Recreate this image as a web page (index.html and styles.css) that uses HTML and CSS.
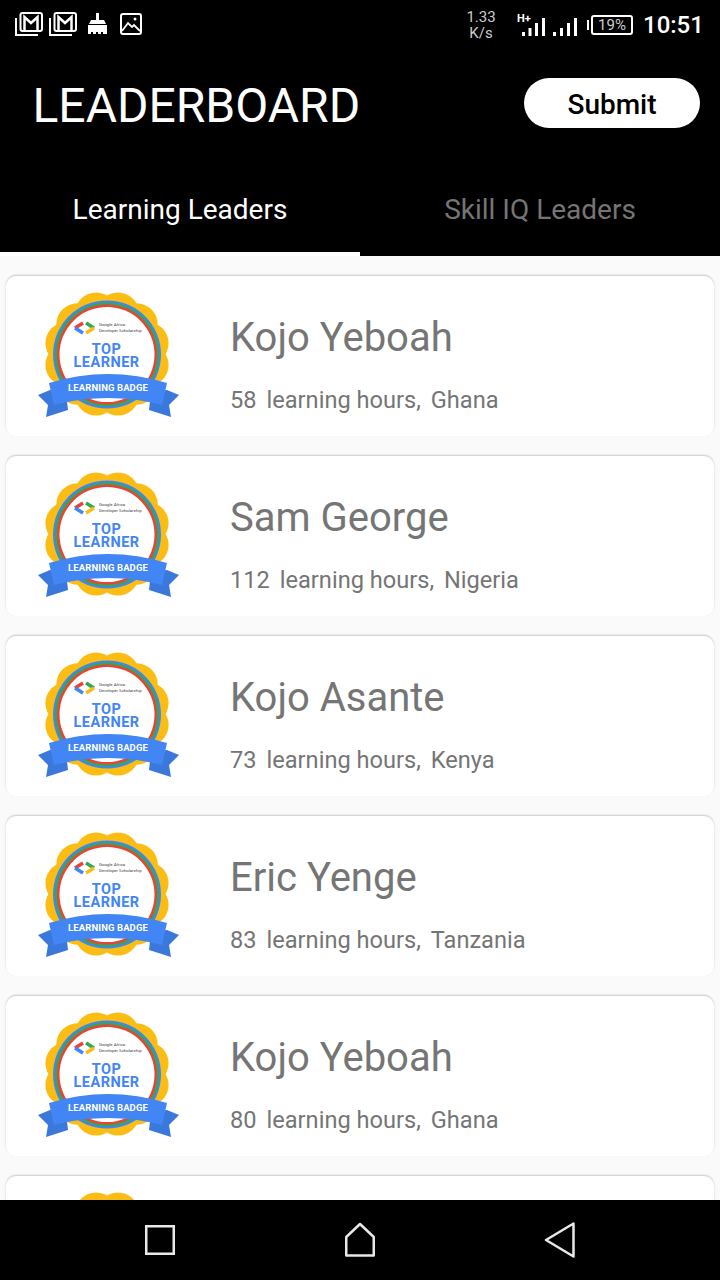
FILE: index.html
```html
<!DOCTYPE html>
<html lang="en">
<head>
  <meta charset="UTF-8">
  <title>Leaderboard</title>
  <link rel="stylesheet" href="styles.css">
</head>
<body>

  <svg class="defs" width="0" height="0">
    <symbol id="mail" viewBox="0 0 28 24">
      <path d="M1 6v17h22" fill="none" stroke="#fff" stroke-width="2"/>
      <rect x="5.500" y="1" width="21.500" height="18" rx="2" fill="none" stroke="#fff" stroke-width="2"/>
      <path d="M9.500 18V5l6.500 6 6.500-6v13" fill="none" stroke="#fff" stroke-width="2.500"/>
    </symbol>
    <symbol id="badge" viewBox="0 0 145 128">
      <g fill="#fbbc14">
        <circle cx="60.100" cy="21.400" r="21"/><circle cx="81.900" cy="21.400" r="21"/>
        <circle cx="41.300" cy="32.300" r="21"/><circle cx="100.700" cy="32.300" r="21"/>
        <circle cx="30.400" cy="51.100" r="21"/><circle cx="111.600" cy="51.100" r="21"/>
        <circle cx="30.400" cy="72.900" r="21"/><circle cx="111.600" cy="72.900" r="21"/>
        <circle cx="41.300" cy="91.700" r="21"/><circle cx="100.700" cy="91.700" r="21"/>
        <circle cx="60.100" cy="102.600" r="21"/><circle cx="81.900" cy="102.600" r="21"/>
      </g>
      <circle cx="71" cy="62.500" r="54" fill="#4285f4"/>
      <circle cx="71" cy="62.500" r="52" fill="#34a853"/>
      <circle cx="71" cy="62.500" r="50" fill="#ea4335"/>
      <circle cx="71" cy="62.500" r="47.500" fill="#fff"/>
      <path d="M47 31l-8 5" fill="none" stroke="#ea4335" stroke-width="3.500"/>
      <path d="M39 36l8 5" fill="none" stroke="#4285f4" stroke-width="3.500"/>
      <path d="M50 31l8 5" fill="none" stroke="#34a853" stroke-width="3.500"/>
      <path d="M58 36l-8 5" fill="none" stroke="#fbbc14" stroke-width="3.500"/>
      <path d="M2 103l10 10-2 12 22-7-2-18-16-2z" fill="#3b78dc"/>
      <path d="M143 103l-10 10 2 12-22-7 2-18 16-2z" fill="#3b78dc"/>
      <path d="M13 91q59-18 118 0l-5 22q-54-14-108 0z" fill="#4285f4"/>
    </symbol>
  </svg>

  <div class="phone">
    <div class="status-bar">
      <div class="status-left">
        <svg class="icon-mail"><use href="#mail"/></svg>
        <svg class="icon-mail"><use href="#mail"/></svg>
        <svg class="icon-broom" viewBox="0 0 19 22">
          <path d="M8 0h3v7h5l2 4H1l2-4h5zM0 12h19v9h-4v-2h-2v2h-3v-2H8v2H5v-2H3v2H0z" fill="#fff"/>
        </svg>
        <svg class="icon-image" viewBox="0 0 22 22">
          <rect x="1" y="1" width="20" height="20" rx="2" fill="none" stroke="#fff" stroke-width="2"/>
          <path d="M2 18l6-8 4 4 2-2 6 6" fill="none" stroke="#fff" stroke-width="1.800"/>
          <circle cx="15" cy="6" r="1.500" fill="#fff"/>
        </svg>
      </div>
      <div class="status-right">
        <div class="speed">1.33<br>K/s</div>
        <svg class="signal" viewBox="0 0 63 24">
          <text class="signal-type" x="0" y="9">H+</text>
          <path d="M5 19h3v4H5zM11.500 15h3v8h-3zM18 10h3v13h-3zM25 5h3v18h-3zM36 19h3v4h-3zM43 15h3v8h-3zM50 10h3v13h-3zM57 5h3v18h-3z" fill="#fff"/>
        </svg>
        <div class="battery-nub"></div>
        <div class="battery">19%</div>
        <div class="clock">10:51</div>
      </div>
    </div>

    <div class="top-bar">
      <h1>LEADERBOARD</h1>
      <button type="button" class="submit-btn">Submit</button>
    </div>

    <div class="tabs">
      <div class="tab active">Learning Leaders</div>
      <div class="tab">Skill IQ Leaders</div>
    </div>

    <div class="list">
      <div class="card">
        <svg class="badge" viewBox="0 0 145 128">
          <use href="#badge"/>
          <text class="badge-small" x="63" y="34">Google Africa</text>
          <text class="badge-small" x="63" y="40">Developer Scholarship</text>
          <text class="badge-top"><tspan x="70.500" y="61.500">TOP</tspan><tspan x="70.500" y="74.500">LEARNER</tspan></text>
          <text class="badge-ribbon" x="72" y="98.500">LEARNING BADGE</text>
        </svg>
        <div class="info">
          <div class="name">Kojo Yeboah</div>
          <div class="meta"><span>58</span><span>learning hours,</span><span>Ghana</span></div>
        </div>
      </div>
      <div class="card">
        <svg class="badge" viewBox="0 0 145 128">
          <use href="#badge"/>
          <text class="badge-small" x="63" y="34">Google Africa</text>
          <text class="badge-small" x="63" y="40">Developer Scholarship</text>
          <text class="badge-top"><tspan x="70.500" y="61.500">TOP</tspan><tspan x="70.500" y="74.500">LEARNER</tspan></text>
          <text class="badge-ribbon" x="72" y="98.500">LEARNING BADGE</text>
        </svg>
        <div class="info">
          <div class="name">Sam George</div>
          <div class="meta"><span>112</span><span>learning hours,</span><span>Nigeria</span></div>
        </div>
      </div>
      <div class="card">
        <svg class="badge" viewBox="0 0 145 128">
          <use href="#badge"/>
          <text class="badge-small" x="63" y="34">Google Africa</text>
          <text class="badge-small" x="63" y="40">Developer Scholarship</text>
          <text class="badge-top"><tspan x="70.500" y="61.500">TOP</tspan><tspan x="70.500" y="74.500">LEARNER</tspan></text>
          <text class="badge-ribbon" x="72" y="98.500">LEARNING BADGE</text>
        </svg>
        <div class="info">
          <div class="name">Kojo Asante</div>
          <div class="meta"><span>73</span><span>learning hours,</span><span>Kenya</span></div>
        </div>
      </div>
      <div class="card">
        <svg class="badge" viewBox="0 0 145 128">
          <use href="#badge"/>
          <text class="badge-small" x="63" y="34">Google Africa</text>
          <text class="badge-small" x="63" y="40">Developer Scholarship</text>
          <text class="badge-top"><tspan x="70.500" y="61.500">TOP</tspan><tspan x="70.500" y="74.500">LEARNER</tspan></text>
          <text class="badge-ribbon" x="72" y="98.500">LEARNING BADGE</text>
        </svg>
        <div class="info">
          <div class="name">Eric Yenge</div>
          <div class="meta"><span>83</span><span>learning hours,</span><span>Tanzania</span></div>
        </div>
      </div>
      <div class="card">
        <svg class="badge" viewBox="0 0 145 128">
          <use href="#badge"/>
          <text class="badge-small" x="63" y="34">Google Africa</text>
          <text class="badge-small" x="63" y="40">Developer Scholarship</text>
          <text class="badge-top"><tspan x="70.500" y="61.500">TOP</tspan><tspan x="70.500" y="74.500">LEARNER</tspan></text>
          <text class="badge-ribbon" x="72" y="98.500">LEARNING BADGE</text>
        </svg>
        <div class="info">
          <div class="name">Kojo Yeboah</div>
          <div class="meta"><span>80</span><span>learning hours,</span><span>Ghana</span></div>
        </div>
      </div>
      <div class="card">
        <svg class="badge" viewBox="0 0 145 128"><use href="#badge"/></svg>
      </div>
    </div>

    <div class="nav-bar">
      <svg class="nav-icon" viewBox="0 0 32 36">
        <rect x="2.250" y="4.250" width="27.500" height="27.500" fill="none" stroke="#e8e8e8" stroke-width="2.500"/>
      </svg>
      <svg class="nav-icon" viewBox="0 0 32 36">
        <path d="M2.250 33.500V15L16 2l13.750 13v18.500z" fill="none" stroke="#e8e8e8" stroke-width="2.500" stroke-linejoin="round"/>
      </svg>
      <svg class="nav-icon" viewBox="0 0 32 36">
        <path d="M29.500 1.500v33L2 18z" fill="none" stroke="#e8e8e8" stroke-width="2.500" stroke-linejoin="round"/>
      </svg>
    </div>
  </div>

</body>
</html>
```

FILE: styles.css
```css
body {
  margin: 0;
  background-color: #fafafa;
  font-family: Roboto, "Liberation Sans", sans-serif;
}

.defs {
  position: absolute;
}

.phone {
  display: flex;
  flex-direction: column;
  width: 720px;
  height: 1280px;
  overflow: hidden;
}

.status-bar {
  display: flex;
  justify-content: space-between;
  align-items: center;
  height: 50px;
  padding: 0 17px 0 15px;
  background-color: #000;
  color: #fff;
}

.status-left {
  display: flex;
  align-items: center;
  padding-bottom: 2px;
}

.icon-mail {
  width: 28px;
  height: 24px;
  margin-right: 6px;
}

.icon-broom {
  width: 19px;
  height: 22px;
  margin-left: 5px;
  margin-right: 13px;
}

.icon-image {
  width: 22px;
  height: 22px;
}

.status-right {
  display: flex;
  align-items: center;
}

.speed {
  width: 34px;
  font-size: 15px;
  line-height: 16px;
  text-align: center;
  color: #ccc;
  margin-right: 19px;
}

.signal {
  width: 63px;
  height: 24px;
  margin-right: 7px;
}

.signal-type {
  font-size: 11px;
  font-weight: 700;
  fill: #fff;
}

.battery-nub {
  width: 2px;
  height: 10px;
  margin-right: 2px;
  background-color: #fff;
}

.battery {
  box-sizing: border-box;
  width: 42px;
  height: 20px;
  border: 2px solid #fff;
  border-radius: 3px;
  font-size: 15px;
  line-height: 16px;
  text-align: center;
  color: #ccc;
  margin-right: 10px;
}

.clock {
  width: 60px;
  font-size: 24px;
  font-weight: 500;
}

.top-bar {
  display: flex;
  justify-content: space-between;
  align-items: center;
  height: 110px;
  padding: 0 20px 0 32.500px;
  background-color: #000;
}

h1 {
  margin: 0;
  font-size: 48px;
  font-weight: 400;
  color: #fff;
}

.submit-btn {
  width: 176px;
  height: 50px;
  margin-bottom: 4px;
  padding: 2px 0 0;
  border: none;
  border-radius: 25px;
  background-color: #fff;
  color: #000;
  font-family: inherit;
  font-size: 28px;
  font-weight: 500;
}

.tabs {
  display: flex;
  height: 96px;
  background-color: #000;
}

.tab {
  flex: 1;
  box-sizing: border-box;
  padding-top: 33px;
  text-align: center;
  font-size: 28px;
  color: #757575;
}

.tab.active {
  color: #fff;
  border-bottom: 4px solid #fff;
}

.list {
  flex: 1;
  overflow: hidden;
  padding: 20px 6px 0;
}

.card {
  display: flex;
  align-items: center;
  height: 160px;
  margin-bottom: 20px;
  background-color: #fff;
  border-radius: 10px;
  box-shadow: 0 -1px 2px rgba(0, 0, 0, 0.2);
}

.badge {
  width: 145px;
  height: 128px;
  margin: 0 49px 0 30px;
  flex-shrink: 0;
}

.badge-small {
  font-size: 4.300px;
  fill: #444;
}

.badge-top {
  font-size: 14.500px;
  font-weight: 700;
  letter-spacing: 0.5px;
  text-anchor: middle;
  fill: #4285f4;
}

.badge-ribbon {
  font-size: 9.500px;
  font-weight: 700;
  letter-spacing: 0.1px;
  text-anchor: middle;
  fill: #fff;
}

.info {
  padding-top: 15px;
}

.name {
  font-size: 40px;
  color: #757575;
  margin-bottom: 25px;
}

.meta {
  display: flex;
  gap: 10px;
  font-size: 23.600px;
  color: #757575;
}

.nav-bar {
  display: flex;
  justify-content: space-between;
  align-items: center;
  flex-shrink: 0;
  height: 80px;
  padding: 0 144px;
  background-color: #000;
}

.nav-icon {
  width: 32px;
  height: 36px;
}
```
